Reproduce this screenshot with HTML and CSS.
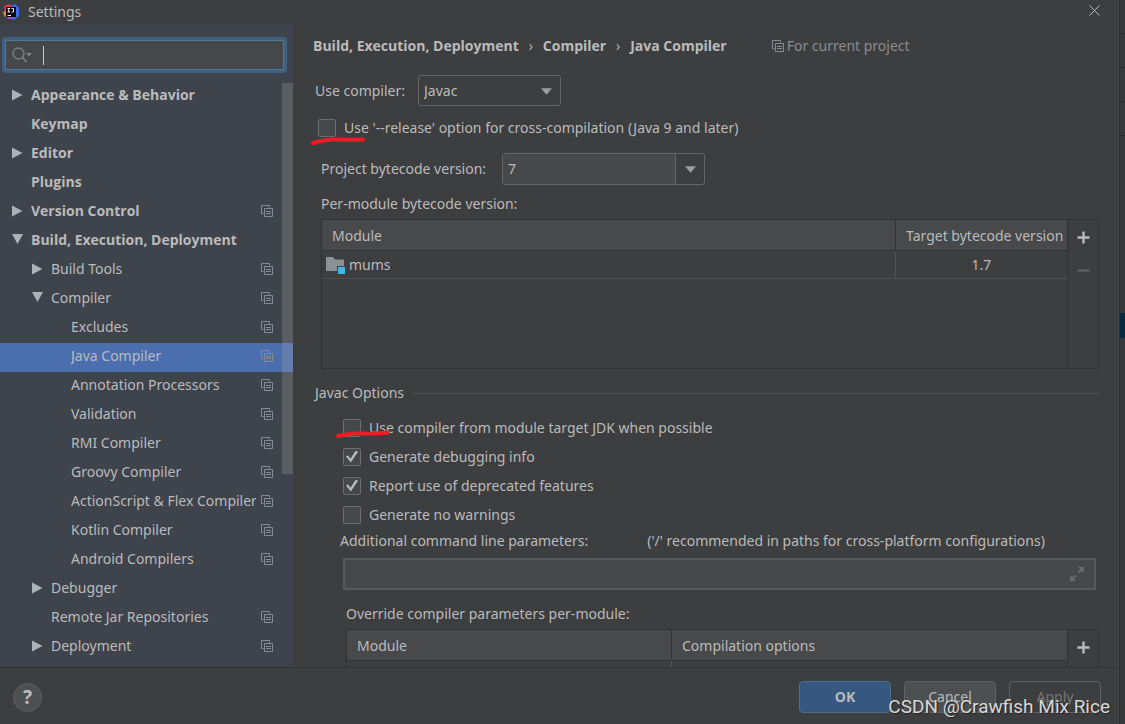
FILE: index.html
```
<!DOCTYPE html>
<html lang="en">
<head>
<meta charset="utf-8">
<title>Settings</title>
<link rel="stylesheet" href="styles.css">
</head>
<body>
<svg class="sprite" aria-hidden="true">
  <symbol id="copy" viewBox="0 0 12 12"><path d="M2.5 8.5H.5V.5h8v2M3.5 3.5h8v8h-8zM5 6.5h5M5 8.5h5" fill="none" stroke="currentColor"/></symbol>
  <symbol id="right" viewBox="0 0 11 12"><path d="M0 0.500L10.500 6L0 11.500z" fill="currentColor"/></symbol>
  <symbol id="down" viewBox="0 0 11 12"><path d="M0 0H11L5.500 10z" fill="currentColor"/></symbol>
  <symbol id="plus" viewBox="0 0 13 13"><path d="M6.500 0.500V12.500M0.500 6.500H12.500" stroke="currentColor" stroke-width="2.400"/></symbol>
  <symbol id="minus" viewBox="0 0 13 13"><path d="M0.500 6.500H12.500" stroke="currentColor" stroke-width="2"/></symbol>
  <symbol id="folder" viewBox="0 0 20 18"><path d="M0 1H7L9 3.500H18V10H11V15H0z" fill="#8b9297"/><path d="M12 11H19V18H12z" fill="#40b6e0"/></symbol>
</svg>
<div class="screen">
<div class="dialog">
  <header class="titlebar">
    <svg class="logo" viewBox="0 0 16 16" aria-hidden="true"><path d="M1 2L7 0L9 3L4 13L0 10L2 8z" fill="#f0304e"/><path d="M0 8L4 7L5 13L2 13z" fill="#f58529"/><path d="M9 1L12 0L16 4V12L11 16L7 14z" fill="#3b6cf0"/><path d="M3 13L9 12L10 15L6 15z" fill="#a04be0"/><path d="M3 3H13V13H3z" fill="#08060c"/><path d="M4.500 4.500H7M5.750 4.500V8M4.500 8H7M8.500 4.500H10.500V8H8.500M4.500 11.500H8" fill="none" stroke="#eee"/></svg>
    <h1 class="title">Settings</h1>
    <button class="close" aria-label="Close"><svg viewBox="0 0 11 11"><path d="M.5.5l10 10M10.500.5l-10 10" stroke="currentColor" fill="none"/></svg></button>
  </header>
  <div class="body">
    <aside class="sidebar">
      <label class="search">
        <svg viewBox="0 0 20 16" aria-hidden="true"><circle cx="6.500" cy="6.500" r="5.500" fill="none" stroke="currentColor" stroke-width="1.300"/><path d="M10.500 10.500L14.500 15" stroke="currentColor" stroke-width="1.800"/><path d="M14 6H20L17 9.500z" fill="currentColor"/></svg>
        <span class="caret"></span>
        <input type="text" aria-label="Search settings">
      </label>
      <nav class="tree" aria-label="Settings categories">
        <button class="item bold"><svg class="arrow"><use href="#right"/></svg><span class="name">Appearance &amp; Behavior</span></button>
        <button class="item bold"><span class="arrow"></span><span class="name">Keymap</span></button>
        <button class="item bold"><svg class="arrow"><use href="#right"/></svg><span class="name">Editor</span></button>
        <button class="item bold"><span class="arrow"></span><span class="name">Plugins</span></button>
        <button class="item bold"><svg class="arrow"><use href="#right"/></svg><span class="name">Version Control</span><svg class="copy"><use href="#copy"/></svg></button>
        <button class="item bold"><svg class="arrow"><use href="#down"/></svg><span class="name">Build, Execution, Deployment</span></button>
        <button class="item sub"><svg class="arrow"><use href="#right"/></svg><span class="name">Build Tools</span><svg class="copy"><use href="#copy"/></svg></button>
        <button class="item sub"><svg class="arrow"><use href="#down"/></svg><span class="name">Compiler</span><svg class="copy"><use href="#copy"/></svg></button>
        <button class="item leaf"><span class="name">Excludes</span><svg class="copy"><use href="#copy"/></svg></button>
        <button class="item leaf selected"><span class="name">Java Compiler</span><svg class="copy"><use href="#copy"/></svg></button>
        <button class="item leaf"><span class="name">Annotation Processors</span><svg class="copy"><use href="#copy"/></svg></button>
        <button class="item leaf"><span class="name">Validation</span><svg class="copy"><use href="#copy"/></svg></button>
        <button class="item leaf"><span class="name">RMI Compiler</span><svg class="copy"><use href="#copy"/></svg></button>
        <button class="item leaf"><span class="name">Groovy Compiler</span><svg class="copy"><use href="#copy"/></svg></button>
        <button class="item leaf"><span class="name">ActionScript &amp; Flex Compiler</span><svg class="copy"><use href="#copy"/></svg></button>
        <button class="item leaf"><span class="name">Kotlin Compiler</span><svg class="copy"><use href="#copy"/></svg></button>
        <button class="item leaf"><span class="name">Android Compilers</span><svg class="copy"><use href="#copy"/></svg></button>
        <button class="item sub"><svg class="arrow"><use href="#right"/></svg><span class="name">Debugger</span></button>
        <button class="item sub"><span class="arrow"></span><span class="name">Remote Jar Repositories</span><svg class="copy"><use href="#copy"/></svg></button>
        <button class="item sub"><svg class="arrow"><use href="#right"/></svg><span class="name">Deployment</span><svg class="copy"><use href="#copy"/></svg></button>
        <span class="thumb"></span>
      </nav>
    </aside>
    <main class="content">
      <div class="crumbs">
        <span>Build, Execution, Deployment</span><span class="sep">›</span><span>Compiler</span><span class="sep">›</span><span>Java Compiler</span>
        <span class="scope"><svg class="copy"><use href="#copy"/></svg>For current project</span>
      </div>
      <div class="row compiler">
        <label for="compiler">Use compiler:</label>
        <span class="select"><select id="compiler"><option>Javac</option></select><svg class="chevron" viewBox="0 0 12 7"><path d="M0 0H12L6 7z" fill="currentColor"/></svg></span>
      </div>
      <label class="check release"><input type="checkbox"><span>Use '--release' option for cross-compilation (Java 9 and later)</span>
        <svg class="mark" viewBox="0 0 56 10" aria-hidden="true"><path d="M3 8Q16 4 28 4.500T53 4.500" /></svg></label>
      <div class="row version">
        <label for="bytecode">Project bytecode version:</label>
        <span class="combo"><input id="bytecode" type="text" value="7"><button aria-label="Show versions"><svg class="chevron" viewBox="0 0 12 7"><path d="M0 0H12L6 7z" fill="currentColor"/></svg></button></span>
      </div>
      <p class="caption">Per-module bytecode version:</p>
      <div class="panel modules">
        <table class="grid">
          <colgroup><col><col class="target"></colgroup>
          <thead><tr><th>Module</th><th>Target bytecode version</th></tr></thead>
          <tbody><tr><td><span class="module"><svg class="folder"><use href="#folder"/></svg>mums</span></td><td class="center">1.7</td></tr></tbody>
        </table>
        <div class="tools"><button aria-label="Add"><svg><use href="#plus"/></svg></button><button aria-label="Remove" disabled><svg><use href="#minus"/></svg></button></div>
      </div>
      <h2 class="section">Javac Options</h2>
      <div class="options">
        <label class="check"><input type="checkbox"><span>Use compiler from module target JDK when possible</span>
          <svg class="mark" viewBox="0 0 56 10" aria-hidden="true"><path d="M3 7Q14 4 28 4.500T53 3.500" /></svg></label>
        <label class="check"><input type="checkbox" checked><span>Generate debugging info</span></label>
        <label class="check"><input type="checkbox" checked><span>Report use of deprecated features</span></label>
        <label class="check"><input type="checkbox"><span>Generate no warnings</span></label>
      </div>
      <div class="row params"><label for="params">Additional command line parameters:</label><span>('/' recommended in paths for cross-platform configurations)</span></div>
      <div class="field"><input id="params" type="text"><button aria-label="Expand"><svg viewBox="0 0 16 16"><path d="M9 1H15V7L12.800 4.800L10 7.500L8.500 6L11.200 3.200zM1 9V15H7L4.800 12.800L7.500 10L6 8.500L3.200 11.200z" fill="currentColor"/></svg></button></div>
      <p class="caption override">Override compiler parameters per-module:</p>
      <div class="panel overrides">
        <table class="grid">
          <colgroup><col class="name-col"><col></colgroup>
          <thead><tr><th>Module</th><th>Compilation options</th></tr></thead>
          <tbody><tr><td><span class="module"><svg class="folder"><use href="#folder"/></svg></span></td><td></td></tr></tbody>
        </table>
        <div class="tools"><button aria-label="Add"><svg><use href="#plus"/></svg></button></div>
      </div>
    </main>
  </div>
  <footer class="footer">
    <button class="help" aria-label="Help">?</button>
    <button class="btn primary">OK</button>
    <button class="btn cancel">Cancel</button>
    <button class="btn apply" disabled>Apply</button>
  </footer>
</div>
<div class="backdrop"><i></i><i></i><i></i><i></i><b></b></div>
<div class="watermark">CSDN @Crawfish Mix Rice</div>
</div>
</body>
</html>
```
FILE: styles.css
```
* { box-sizing: border-box; }
body { margin: 0; background: #3c3f41; color: #bbbbbb; font: 14px/20px "Noto Sans", "Open Sans", sans-serif; }
button, input, select { font: inherit; color: inherit; margin: 0; }
button { padding: 0; border: 0; background: none; }
input:focus, select:focus { outline: 0; }
svg { display: block; flex: none; }
.sprite { position: absolute; width: 0; height: 0; }
.screen { position: relative; display: flex; height: 100vh; overflow: hidden; }
.dialog { flex: 1; min-width: 0; display: flex; flex-direction: column; background: #3c3e40; border-right: 1px solid #46484a; }

.titlebar { display: flex; align-items: center; height: 24px; flex: none; padding: 0 18px 0 3px; background: #3c3e3f; }
.logo { width: 16px; height: 16px; }
.title { flex: 1; margin: 0 0 0 9px; font-size: 14px; font-weight: 400; }
.close { width: 11px; height: 11px; margin-bottom: 3px; }
.close svg { width: 11px; height: 11px; }

.body { flex: 1; min-height: 0; display: flex; }
.sidebar { width: 293px; flex: none; background: #3e434c; overflow: hidden; padding-top: 13px; }
.search { display: flex; align-items: center; height: 36px; margin: 0 6px 0 2px; padding: 0 7px; border: 3px solid #3d6185; border-radius: 4px; background: #45484a; box-shadow: inset 0 0 0 1px #55788f; }
.search svg { width: 20px; height: 16px; color: #7d8284; }
.caret { width: 1px; height: 19px; margin-left: 11px; background: #cccccc; }
.search input { flex: 1; min-width: 0; border: 0; background: none; }
.tree { position: relative; display: flex; flex-direction: column; margin-top: 9px; }
.item { display: flex; align-items: center; height: 29px; padding: 0 20px 3px 12px; text-align: left; }
.item.sub { padding-left: 32px; }
.item.leaf { padding-left: 71px; }
.bold, .crumbs, .primary { font-family: "Open Sans", "Noto Sans", sans-serif; font-weight: 700; }
.item.selected { background: #4b6eaf; }
.arrow { width: 11px; height: 12px; margin-right: 8px; flex: none; color: #afb1b8; }
.name { flex: 1; min-width: 0; margin-right: 5px; overflow: hidden; white-space: nowrap; }
.copy { width: 12px; height: 12px; color: #858c95; }
.thumb { position: absolute; top: 1px; right: 0; width: 11px; height: 391px; background: rgba(166, 166, 166, 0.28); }

.content { flex: 1; min-width: 0; overflow: hidden; padding: 12px 19px 0 20px; }
.crumbs { display: flex; align-items: center; height: 20px; white-space: nowrap; }
.sep { width: 24px; text-align: center; font-weight: 400; }
.scope { display: flex; align-items: center; gap: 3px; margin-left: 45px; font: 14px/20px "Noto Sans", "Open Sans", sans-serif; color: #8c8c8c; }
.row { display: flex; align-items: center; }
.compiler { gap: 13px; margin: 19px 0 0 2px; }
.select { position: relative; width: 143px; }
.select select { width: 100%; height: 31px; padding: 0 5px; border: 1px solid #646668; border-radius: 3px; background: #3c3f41; appearance: none; display: block; }
.chevron { width: 11px; height: 7px; color: #9c9ea0; }
.select .chevron { position: absolute; right: 9px; top: 13px; pointer-events: none; }
.check { position: relative; display: flex; align-items: center; gap: 8px; height: 29px; width: max-content; }
.check input { appearance: none; width: 18px; height: 18px; border: 1px solid #6b6e70; border-radius: 2px; background: #43494a; display: grid; place-content: center; }
.check input:checked::before { content: ""; width: 12px; height: 12px; background: #bbbbbb; clip-path: polygon(0 50%, 15% 40%, 37% 68%, 82% 0, 100% 10%, 40% 100%); }
.mark { position: absolute; left: -8px; top: 22px; width: 56px; height: 10px; fill: none; stroke: #ee1c24; stroke-width: 4; stroke-linecap: round; }
.options .mark { top: 16px; left: -10px; width: 60px; }
.release { margin: 7px 0 0 5px; }
.version { gap: 16px; margin: 11px 0 0 8px; }
.combo { display: flex; width: 203px; height: 32px; border: 1px solid #646668; border-radius: 3px; overflow: hidden; }
.combo input { flex: 1; min-width: 0; padding: 0 5px; border: 0; background: #45494a; }
.combo button { width: 29px; border-left: 1px solid #646668; display: grid; place-items: center; }
.caption { margin: 9px 0 5px 8px; }
.panel { display: flex; margin-left: 8px; border: 1px solid #303234; }
.modules { height: 150px; }
.grid { flex: 1; min-width: 0; table-layout: fixed; border-collapse: separate; border-spacing: 0; align-self: flex-start; }
.target { width: 172px; }
.name-col { width: 45%; }
.grid th { height: 31px; padding: 2px 0 0 10px; font-weight: 400; text-align: left; white-space: nowrap; overflow: hidden; background: #47494b; border-bottom: 1px solid #303234; }
.grid th + th { border-left: 1px solid #323436; }
.grid td { height: 28px; padding: 0 4px; border-bottom: 1px solid #4e5052; }
.grid td + td { border-left: 1px solid #4e5052; }
.grid td.center { text-align: center; }
.module { display: flex; align-items: center; gap: 3px; }
.folder { width: 20px; height: 18px; }
.tools { display: flex; flex-direction: column; align-items: center; gap: 20px; width: 31px; flex: none; padding-top: 11px; border-left: 1px solid #303234; }
.tools button { width: 13px; height: 13px; }
.tools svg { width: 13px; height: 13px; color: #bbbbbb; }
.tools button:disabled svg { color: #626466; }
.section { display: flex; align-items: center; gap: 8px; margin: 14px 0 0 2px; font-size: 14px; font-weight: 400; }
.section::after { content: ""; flex: 1; height: 1px; background: #515355; }
.options { margin: 10px 0 0 30px; }
.params { gap: 59px; margin: 2px 0 0 27px; white-space: nowrap; }
.field { display: flex; align-items: center; height: 32px; margin: 7px 3px 0 30px; border: 2px solid #58595b; background: #45494a; padding-right: 9px; }
.field input { flex: 1; min-width: 0; border: 0; background: none; }
.field svg { width: 16px; height: 16px; color: #686b6c; }
.override { margin: 14px 0 5px 33px; }
.overrides { margin-left: 33px; border-bottom: 0; }

.footer { display: flex; align-items: center; height: 57px; flex: none; padding: 2px 17px 0 13px; border-top: 1px solid #303233; background: #3c3e3f; }
.help { width: 29px; height: 29px; margin-right: auto; border: 1px solid #5c6061; border-radius: 50%; background: #4c5052; font-size: 19px; font-weight: 700; }
.btn { width: 92px; height: 32px; margin-left: 13px; border: 1px solid #5e6062; border-radius: 4px; background: #4c5052; }
.btn.primary { border-color: #4c708c; background: #365880; }
.btn.apply { background: none; color: #777777; }

.backdrop { width: 6px; flex: none; display: flex; flex-direction: column; background: #37393a; border-left: 1px solid #2a2c2d; }
.backdrop i { height: 34px; border-bottom: 1px solid #292b2c; }
.backdrop b { height: 25px; margin-top: 177px; background: #0a2a42; }
.watermark { position: absolute; right: 15px; bottom: 5px; font: 19px/24px Roboto, "Liberation Sans", sans-serif; color: #d8d8d8; text-shadow: 1px 1px 1px #222222; pointer-events: none; }
```
